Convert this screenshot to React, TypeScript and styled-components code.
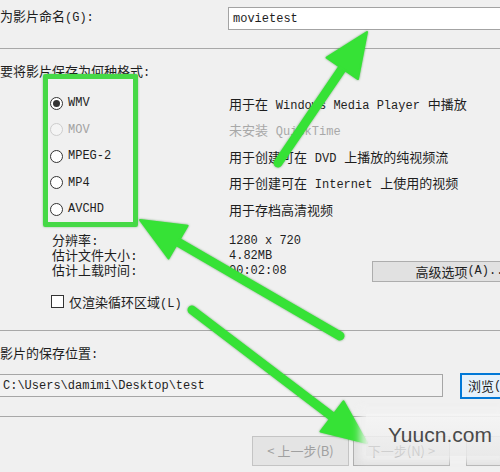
import styled, { createGlobalStyle } from "styled-components";

const GlobalStyle = createGlobalStyle`
  html, body {
    margin: 0;
    padding: 0;
    background: #f0f0f0;
  }
  body {
    font-family: "Liberation Mono", "Noto Sans CJK SC", monospace;
    font-size: 13px;
    color: #1e1e1e;
  }
`

const info = [
  ["分辨率:", "1280 x 720"],
  ["估计文件大小:", "4.82MB"],
  ["估计上载时间:", "00:02:08"],
]

function Arrow({ x1, y1, x2, y2 }: { x1: number; y1: number; x2: number; y2: number }) {
  const len = Math.hypot(x2 - x1, y2 - y1)
  const ux = (x2 - x1) / len
  const uy = (y2 - y1) / len
  const bx = x2 - ux * 44
  const by = y2 - uy * 44
  const px = -uy * 19
  const py = ux * 19
  const lx = x2 - ux * 30
  const ly = y2 - uy * 30
  return (
    <g>
      <line x1={x1} y1={y1} x2={lx} y2={ly} stroke="#36e236" strokeWidth={9} strokeLinecap="round" />
      <polygon points={`${x2},${y2} ${bx + px},${by + py} ${bx - px},${by - py}`} fill="#36e236" strokeLinejoin="round" stroke="#36e236" strokeWidth={2} />
    </g>
  )
}

export default function App() {
  const formats = [
    { name: "WMV", checked: true, desc: <>用于在 <M>Windows Media Player</M> 中播放</> },
    { name: "MOV", disabled: true, desc: <>未安装 <M>QuickTime</M></> },
    { name: "MPEG-2", desc: <>用于创建可在 <M>DVD</M> 上播放的纯视频流</> },
    { name: "MP4", desc: <>用于创建可在 <M>Internet</M> 上使用的视频</> },
    { name: "AVCHD", desc: <>用于存档高清视频</> },
  ]

  return (
    <>
      <GlobalStyle />
      <Page>
        <NameRow>
          <Label>为影片命名<M>(G):</M></Label>
          <TextBox><M>movietest</M></TextBox>
        </NameRow>
        <Rule />

        <SectionLabel $top={16}>要将影片保存为何种格式<M>:</M></SectionLabel>
        <FormatList>
          {formats.map((f) => (
            <FormatRow key={f.name}>
              <RadioLabel $disabled={f.disabled}>
                <Radio $checked={f.checked} $disabled={f.disabled} />
                <M>{f.name}</M>
              </RadioLabel>
              <Desc $disabled={f.disabled}>{f.desc}</Desc>
            </FormatRow>
          ))}
        </FormatList>

        <InfoBlock>
          <InfoGrid>
            {info.map(([k, v]) => (
              <InfoLine key={k}>
                <span>{k}</span>
                <M>{v}</M>
              </InfoLine>
            ))}
          </InfoGrid>
          <AdvButton>高级选项<M>(A)...</M></AdvButton>
        </InfoBlock>

        <CheckRow>
          <Check />
          <span>仅渲染循环区域<M>(L)</M></span>
        </CheckRow>
        <Rule $top={18} />

        <SectionLabel $top={16}>影片的保存位置<M>:</M></SectionLabel>
        <PathRow>
          <PathBox><M>C:\Users\damimi\Desktop\test</M></PathBox>
          <BrowseButton>浏览<M>(R)...</M></BrowseButton>
        </PathRow>
        <Rule $top={17} />

        <ButtonRow>
          <WizardButton disabled>&lt; 上一步(B)</WizardButton>
          <WizardButton>下一步(N) &gt;</WizardButton>
          <WizardButton $gap={16}>取消</WizardButton>
        </ButtonRow>

        <GreenBox />
        <Arrows width={500} height={472}>
          <Arrow x1={278} y1={163} x2={367} y2={32} />
          <Arrow x1={340} y1={336} x2={140} y2={220} />
          <Arrow x1={192} y1={310} x2={367} y2={443} />
        </Arrows>
        <Watermark>Yuucn.com</Watermark>
      </Page>
    </>
  )
}

const Page = styled.div`
  position: relative;
  width: 500px;
  height: 472px;
  overflow: hidden;
  background: #f0f0f0;
  display: flex;
  flex-direction: column;
`

const M = styled.span`
  font-family: "Liberation Mono", monospace;
  font-size: 12px;
`

const NameRow = styled.div`
  display: grid;
  grid-template-columns: 228px 1fr;
  height: 48px;
`

const Label = styled.div`
  margin-top: 9px;
  line-height: 17px;
  white-space: nowrap;
`

const TextBox = styled.div`
  box-sizing: border-box;
  margin-top: 7px;
  width: 300px;
  height: 23px;
  padding-left: 4px;
  display: flex;
  align-items: center;
  background: #fff;
  border: 1px solid #a3a3a3;
`

const Rule = styled.div<{ $top?: number }>`
  margin-top: ${(p) => p.$top ?? 0}px;
  border-top: 1px solid #a8a8a8;
  height: 0;
`

const SectionLabel = styled.div<{ $top: number }>`
  margin-top: ${(p) => p.$top}px;
  line-height: 16px;
  white-space: nowrap;
`

const FormatList = styled.div`
  margin-top: 9px;
  display: flex;
  flex-direction: column;
`

const FormatRow = styled.div`
  display: grid;
  grid-template-columns: 229px 1fr;
  height: 26.5px;
  align-items: center;
`

const RadioLabel = styled.div<{ $disabled?: boolean }>`
  display: flex;
  align-items: center;
  gap: 5px;
  padding-left: 50px;
  color: ${(p) => (p.$disabled ? "#a2a2a2" : "#1e1e1e")};
`

const Radio = styled.span<{ $checked?: boolean; $disabled?: boolean }>`
  box-sizing: border-box;
  width: 13px;
  height: 13px;
  border-radius: 50%;
  border: 1px solid ${(p) => (p.$disabled ? "#cdcdcd" : "#333")};
  background: ${(p) => (p.$disabled ? "#f4f4f4" : "#fff")};
  display: flex;
  align-items: center;
  justify-content: center;
  &::after {
    content: "";
    display: ${(p) => (p.$checked ? "block" : "none")};
    width: 7px;
    height: 7px;
    border-radius: 50%;
    background: #333;
  }
`

const Desc = styled.div<{ $disabled?: boolean }>`
  white-space: nowrap;
  color: ${(p) => (p.$disabled ? "#a8a8a8" : "#1e1e1e")};
`

const InfoBlock = styled.div`
  margin-top: 11px;
  display: flex;
  align-items: flex-start;
`

const InfoGrid = styled.div`
  flex-shrink: 0;
  padding-left: 52px;
  width: 320px;
`

const InfoLine = styled.div`
  display: grid;
  grid-template-columns: 177px 1fr;
  height: 15px;
  line-height: 15px;
  white-space: nowrap;
`

const AdvButton = styled.div`
  box-sizing: border-box;
  flex-shrink: 0;
  margin-top: 27px;
  width: 182px;
  height: 21px;
  display: flex;
  align-items: center;
  justify-content: center;
  background: #e1e1e1;
  border: 1px solid #adadad;
  white-space: nowrap;
`

const CheckRow = styled.div`
  margin-top: 10px;
  height: 20px;
  display: flex;
  align-items: center;
  gap: 5px;
  padding-left: 51px;
`

const Check = styled.span`
  box-sizing: border-box;
  width: 13px;
  height: 13px;
  border: 1px solid #333;
  background: #fff;
`

const PathRow = styled.div`
  margin-top: 10px;
  height: 26px;
  display: flex;
  align-items: center;
  gap: 17px;
`

const PathBox = styled.div`
  box-sizing: border-box;
  flex-shrink: 0;
  width: 443px;
  height: 23px;
  padding-left: 3px;
  display: flex;
  align-items: center;
  background: #f2f2f2;
  border: 1px solid #a6a6a6;
  border-left: none;
`

const BrowseButton = styled.div`
  box-sizing: border-box;
  flex-shrink: 0;
  width: 80px;
  height: 26px;
  padding-left: 7px;
  display: flex;
  align-items: center;
  background: #e5f1fb;
  border: 1px solid #0078d7;
  box-shadow: inset 0 0 0 1px #0078d7;
  white-space: nowrap;
`

const ButtonRow = styled.div`
  margin-top: 19px;
  padding-left: 252px;
  display: flex;
  height: 30px;
  gap: 4px;
`

const WizardButton = styled.button<{ $gap?: number }>`
  box-sizing: border-box;
  flex-shrink: 0;
  width: 97px;
  height: 30px;
  margin-left: ${(p) => (p.$gap ? p.$gap - 4 : 0)}px;
  padding: 0;
  font-family: "Noto Sans CJK SC", sans-serif;
  font-size: 13px;
  color: #1e1e1e;
  background: #e1e1e1;
  border: 1px solid #adadad;
  border-radius: 0;
  &:disabled {
    color: #a0a0a0;
    background: #e4e4e4;
    border-color: #c4c4c4;
  }
`

const GreenBox = styled.div`
  position: absolute;
  left: 43px;
  top: 74px;
  width: 95px;
  height: 153px;
  box-sizing: border-box;
  border: 5px solid #46d946;
  border-radius: 2px;
  box-shadow: 0 0 2px rgba(30, 120, 30, 0.5);
`

const Arrows = styled.svg`
  position: absolute;
  left: 0;
  top: 0;
  pointer-events: none;
  filter: drop-shadow(0 0 1px rgba(20, 110, 20, 0.55));
`

const Watermark = styled.div`
  position: absolute;
  left: 366px;
  top: 414px;
  width: 134px;
  height: 42px;
  padding-left: 22px;
  box-sizing: border-box;
  display: flex;
  align-items: center;
  font-family: "Liberation Sans", sans-serif;
  font-size: 21px;
  color: #4a4a4a;
  background: linear-gradient(to bottom, rgba(245, 245, 245, 0.9), rgba(235, 235, 235, 0.85));
  box-shadow: 0 0 8px 6px rgba(242, 242, 242, 0.85);
`
